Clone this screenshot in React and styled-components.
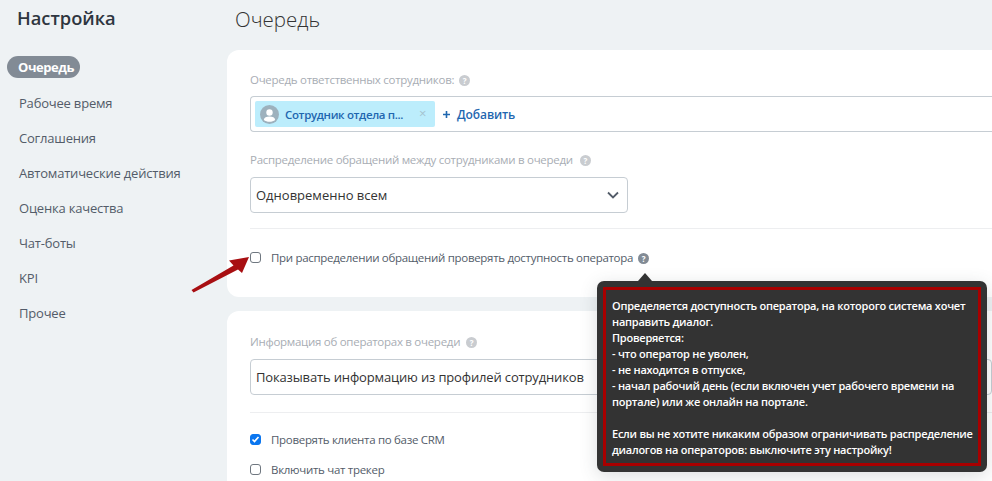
import React from 'react'
import styled, { createGlobalStyle } from 'styled-components'

const GlobalStyle = createGlobalStyle`
  html, body {
    margin: 0;
    height: 100%;
    overflow: hidden;
    background: #eef2f4;
    font-family: "Open Sans", "Liberation Sans", sans-serif;
  }
`

const Page = styled.div`
  display: flex;
  width: 992px;
  height: 481px;
  overflow: hidden;
  position: relative;
`

const Sidebar = styled.aside`
  width: 227px;
  flex-shrink: 0;
  padding-left: 7px;
  box-sizing: border-box;
`

const SideTitle = styled.div`
  font-size: 18.3px;
  font-weight: 600;
  line-height: 26px;
  color: #2e3640;
  margin: 5px 0 0 10px;
`

const Menu = styled.nav`
  display: flex;
  flex-direction: column;
  align-items: flex-start;
  margin-top: 25px;
`

const MenuItem = styled.a`
  height: 35px;
  display: flex;
  align-items: center;
  font-size: 13px;
  letter-spacing: -0.2px;
  color: #535c69;
  padding-left: 12px;
`

const ActiveItem = styled.a`
  height: 22px;
  margin: 0 0 7px;
  padding: 0 6px 0 11px;
  border-radius: 11px;
  background: #828b95;
  color: #fff;
  font-size: 13px;
  font-weight: 700;
  letter-spacing: -0.45px;
  display: flex;
  align-items: center;
`

const Main = styled.main`
  flex: 1;
  min-width: 0;
`

const PageTitle = styled.h1`
  font-size: 20.5px;
  font-weight: 300;
  line-height: 30px;
  color: #333;
  margin: 4px 0 16px 8px;
`

const Card = styled.section`
  background: #fff;
  border-radius: 12px 0 0 12px;
  padding: ${p => p.$pad};
  margin-bottom: 14px;
  height: ${p => p.$h}px;
  box-sizing: border-box;
`

const Label = styled.div`
  display: flex;
  align-items: center;
  font-size: 11.5px;
  letter-spacing: -0.28px;
  line-height: 16px;
  color: #a8adb4;
  margin-bottom: ${p => p.$mb}px;
`

const Hint = styled.span`
  width: 11px;
  height: 11px;
  margin-left: ${p => p.$ml || 5}px;
  border-radius: 50%;
  background: ${p => p.$bg || '#c9ccd0'};
  color: #fff;
  font-size: 8px;
  font-weight: 700;
  letter-spacing: 0;
  line-height: 11px;
  text-align: center;
  display: inline-block;
  flex-shrink: 0;
`

const TagBox = styled.div`
  display: flex;
  align-items: center;
  height: 36px;
  box-sizing: border-box;
  border: 1px solid #c6cdd3;
  border-right: 0;
  border-radius: 4px 0 0 4px;
  padding-left: 4px;
  margin-bottom: 20px;
`

const Tag = styled.div`
  display: flex;
  align-items: center;
  width: 180px;
  height: 26px;
  box-sizing: border-box;
  background: #bcedfc;
  border-radius: 2px;
  padding: 0 5px;
  font-size: 11.5px;
  letter-spacing: -0.35px;
  font-weight: 600;
  color: #1f67b0;
`

const Avatar = styled.span`
  width: 19px;
  height: 19px;
  border-radius: 50%;
  background: #9db1bd;
  margin-right: 6px;
  flex-shrink: 0;
  display: flex;
`

const TagName = styled.span`
  flex: 1;
  white-space: nowrap;
`

const TagClose = styled.span`
  color: #a5c3cf;
  font-size: 13px;
  font-weight: 400;
  margin: -2px 4px 0 0;
`

const AddLink = styled.a`
  display: flex;
  align-items: center;
  gap: 7px;
  margin: 1px 0 0 8px;
  font-size: 12px;
  letter-spacing: -0.1px;
  font-weight: 600;
  color: #1f67b0;
`

const Select = styled.div`
  display: flex;
  align-items: center;
  justify-content: space-between;
  width: ${p => (p.$wide ? 'auto' : '378px')};
  height: 36px;
  box-sizing: border-box;
  border: 1px solid #c6cdd3;
  border-radius: 4px;
  padding: 0 8px 0 5px;
  font-size: 13px;
  letter-spacing: ${p => (p.$wide ? '-0.15px' : '0')};
  color: #333;
`

const Divider = styled.hr`
  border: 0;
  border-top: 1px solid #edeef0;
  margin: ${p => p.$m};
`

const CheckRow = styled.label`
  display: flex;
  align-items: center;
  gap: 10px;
  height: 16px;
  font-size: 11.5px;
  letter-spacing: -0.3px;
  color: #535c69;
  margin-bottom: ${p => p.$mb || 0}px;
`

const Box = styled.span`
  width: 11px;
  height: 11px;
  box-sizing: border-box;
  border: 1px solid ${p => (p.$on ? '#0b76ef' : '#6f7780')};
  border-radius: 3px;
  background: ${p => (p.$on ? '#0b76ef' : '#fff')};
  display: flex;
  flex-shrink: 0;
`

const HintWrap = styled.span`
  margin: 2px 0 0 -10px;
  display: flex;
`

const Tooltip = styled.div`
  position: absolute;
  left: 597px;
  top: 281px;
  width: 390px;
  height: 191px;
  box-sizing: border-box;
  padding: 6px;
  background: #333;
  border-radius: 7px;
  box-shadow: 0 4px 18px rgba(60, 70, 80, 0.18);
  &::before {
    content: '';
    position: absolute;
    left: 41px;
    top: -8px;
    border-left: 7px solid transparent;
    border-right: 7px solid transparent;
    border-bottom: 8px solid #333;
  }
`

const TooltipInner = styled.div`
  height: 100%;
  box-sizing: border-box;
  border: 3px solid #a80000;
  padding: 8px 0 0 6px;
  color: #fff;
  font-size: 11px;
  font-weight: 600;
  letter-spacing: -0.24px;
  line-height: 16px;
  white-space: pre-line;
`

const Arrow = styled.svg`
  position: absolute;
  left: 190px;
  top: 253px;
`

const hintText = `Определяется доступность оператора, на которого система хочет
направить диалог.
Проверяется:
- что оператор не уволен,
- не находится в отпуске,
- начал рабочий день (если включен учет рабочего времени на
портале) или же онлайн на портале.

Если вы не хотите никаким образом ограничивать распределение
диалогов на операторов: выключите эту настройку!`

const menu = ['Рабочее время', 'Соглашения', 'Автоматические действия', 'Оценка качества', 'Чат-боты', 'KPI', 'Прочее']

const App = () => (
  <Page>
    <GlobalStyle />
    <Sidebar>
      <SideTitle>Настройка</SideTitle>
      <Menu>
        <ActiveItem>Очередь</ActiveItem>
        {menu.map(m => (
          <MenuItem key={m}>{m}</MenuItem>
        ))}
      </Menu>
    </Sidebar>
    <Main>
      <PageTitle>Очередь</PageTitle>
      <Card $pad="22px 0 0 23px" $h={247}>
        <Label $mb={8}>
          Очередь ответственных сотрудников: <Hint>?</Hint>
        </Label>
        <TagBox>
          <Tag>
            <Avatar>
              <svg width="19" height="19" viewBox="0 0 19 19">
                <circle cx="9.5" cy="7.5" r="3.2" fill="#fff" />
                <path d="M3.8 15c.4-2.6 2.6-3.4 5.7-3.4s5.300.8 5.700 3.400c-1.500 1.200-3.500 1.800-5.700 1.800s-4.200-.6-5.700-1.800z" fill="#fff" />
              </svg>
            </Avatar>
            <TagName>Сотрудник отдела п...</TagName>
            <TagClose>×</TagClose>
          </Tag>
          <AddLink>
            <svg width="7" height="7" viewBox="0 0 7 7">
              <path d="M3.5 0v7M0 3.5h7" stroke="#1f67b0" strokeWidth="1.6" />
            </svg>
            Добавить
          </AddLink>
        </TagBox>
        <Label $mb={9}>
          Распределение обращений между сотрудниками в очереди <Hint $ml={7}>?</Hint>
        </Label>
        <Select>
          Одновременно всем
          <svg width="12" height="8" viewBox="0 0 12 8">
            <path d="M1 1.5l5 5 5-5" fill="none" stroke="#535c69" strokeWidth="1.8" />
          </svg>
        </Select>
        <Divider $m="15px 0 20px" />
        <CheckRow>
          <Box />
          При распределении обращений проверять доступность оператора
          <HintWrap>
            <Hint $bg="#828b95">?</Hint>
          </HintWrap>
        </CheckRow>
      </Card>
      <Card $pad="23px 0 0 23px" $h={200}>
        <Label $mb={9}>
          Информация об операторах в очереди <Hint $ml={6}>?</Hint>
        </Label>
        <Select $wide>Показывать информацию из профилей сотрудников</Select>
        <Divider $m="17px 0 18px" />
        <CheckRow $mb={14}>
          <Box $on>
            <svg width="9" height="9" viewBox="0 0 9 9">
              <path d="M1.5 4.5l2 2 4-4.5" fill="none" stroke="#fff" strokeWidth="1.6" />
            </svg>
          </Box>
          Проверять клиента по базе CRM
        </CheckRow>
        <CheckRow>
          <Box />
          Включить чат трекер
        </CheckRow>
      </Card>
    </Main>
    <Arrow width="62" height="40" viewBox="0 0 62 40">
      <path d="M1.5 37L43.5 12.500l-4.500-5L59 4l-7 16-4-3.500L3.500 39.500z" fill="#a80f12" />
    </Arrow>
    <Tooltip>
      <TooltipInner>{hintText}</TooltipInner>
    </Tooltip>
  </Page>
)

export default App
